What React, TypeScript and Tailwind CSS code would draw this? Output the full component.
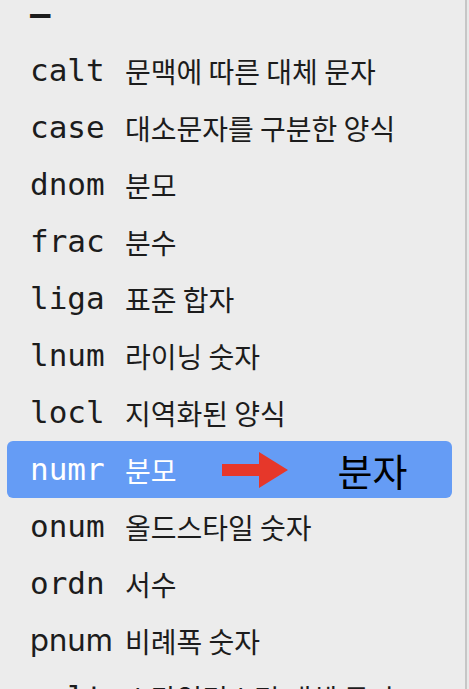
const rows: { tag: string; label: string; prop?: boolean }[] = [
  { tag: '–', label: '' },
  { tag: 'calt', label: '문맥에 따른 대체 문자' },
  { tag: 'case', label: '대소문자를 구분한 양식' },
  { tag: 'dnom', label: '분모' },
  { tag: 'frac', label: '분수' },
  { tag: 'liga', label: '표준 합자' },
  { tag: 'lnum', label: '라이닝 숫자' },
  { tag: 'locl', label: '지역화된 양식' },
  { tag: 'numr', label: '분모' },
  { tag: 'onum', label: '올드스타일 숫자' },
  { tag: 'ordn', label: '서수' },
  { tag: 'pnum', label: '비례폭 숫자', prop: true },
  { tag: 'salt', label: '스타일리스틱 대체 문자' },
];

function Arrow() {
  return (
    <svg width="66" height="36" viewBox="0 0 66 36" className="shrink-0">
      <path d="M0 12 H37 V0 L66 18 L37 36 V24 H0 Z" fill="#e6372a" />
    </svg>
  );
}

export default function App() {
  return (
    <div className="w-[469px] h-[689px] overflow-hidden bg-[#ececec] flex">
      <div className="w-[465px] shrink-0 -mt-[15px]">
        {rows.map((row) => {
          const active = row.tag === 'numr';
          return (
            <div
              key={row.tag}
              className={`h-[57px] ml-[7px] mr-[13px] pl-[23px] flex items-center rounded-[6px] ${
                active ? 'bg-[#659cf5] text-white' : 'text-[#1c1c1c]'
              }`}
            >
              <span
                className={`w-[95px] shrink-0 ${
                  row.prop
                    ? "font-['Inter',sans-serif] text-[31px]"
                    : row.tag === '–'
                      ? "font-['DejaVu_Sans_Mono',monospace] text-[34px] font-bold"
                      : "font-['DejaVu_Sans_Mono',monospace] text-[31px]"
                }`}
              >
                {row.tag}
              </span>
              <span className="font-['Noto_Sans_CJK_KR',sans-serif] text-[28px] whitespace-nowrap">
                {row.label}
              </span>
              {active && (
                <div className="flex items-center ml-[45px]">
                  <Arrow />
                  <span className="ml-[50px] font-['Noto_Sans_CJK_KR',sans-serif] text-[38px] text-black">
                    분자
                  </span>
                </div>
              )}
            </div>
          );
        })}
      </div>
      <div className="w-[2px] h-full bg-[#c6c6c6]" />
      <div className="flex-1 bg-[#e9e9e9]" />
    </div>
  );
}
